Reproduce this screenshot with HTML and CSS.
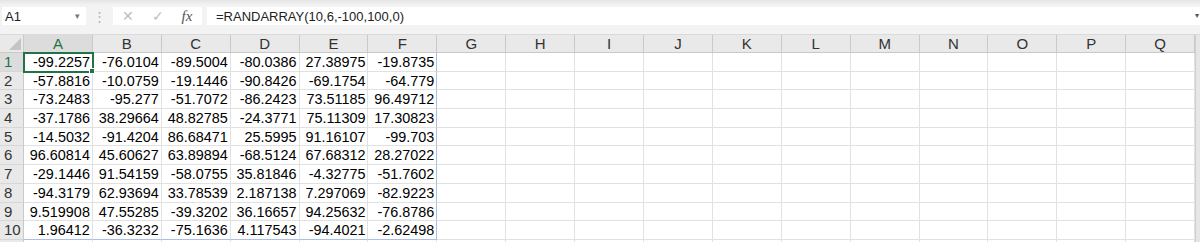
FILE: index.html
```html
<!DOCTYPE html>
<html lang="en">
<head>
    <meta charset="UTF-8">
    <title>Book1 - Excel</title>
    <link rel="stylesheet" href="styles.css">
</head>
<body>
    <div class="app">
        <div class="formula-bar">
            <div class="name-box">
                <span>A1</span>
                <span class="caret">&#9662;</span>
            </div>
            <div class="grip">&#8942;</div>
            <div class="fx-buttons">
                <span class="btn">&#10005;</span>
                <span class="btn">&#10003;</span>
                <span class="btn fx">fx</span>
            </div>
            <div class="formula">
                <span>=RANDARRAY(10,6,-100,100,0)</span>
                <span class="expand">&#9662;</span>
            </div>
        </div>

        <div class="sheet">
            <div class="grid">
                <!-- column headers -->
                <div class="corner">
                    <svg width="12" height="12" viewBox="0 0 12 12"><polygon points="12,0 12,12 0,12" fill="#c4c4c4"/></svg>
                </div>
                <div class="col-head sel">A</div><div class="col-head">B</div><div class="col-head">C</div><div class="col-head">D</div><div class="col-head">E</div><div class="col-head">F</div><div class="col-head">G</div><div class="col-head">H</div><div class="col-head">I</div><div class="col-head">J</div><div class="col-head">K</div><div class="col-head">L</div><div class="col-head">M</div><div class="col-head">N</div><div class="col-head">O</div><div class="col-head">P</div><div class="col-head">Q</div>

                <div class="row-head sel">1</div><div class="active">-99.2257</div><div>-76.0104</div><div>-89.5004</div><div>-80.0386</div><div>27.38975</div><div class="sr">-19.8735</div><div></div><div></div><div></div><div></div><div></div><div></div><div></div><div></div><div></div><div></div><div></div>
                <div class="row-head">2</div><div>-57.8816</div><div>-10.0759</div><div>-19.1446</div><div>-90.8426</div><div>-69.1754</div><div class="sr">-64.779</div><div></div><div></div><div></div><div></div><div></div><div></div><div></div><div></div><div></div><div></div><div></div>
                <div class="row-head">3</div><div>-73.2483</div><div>-95.277</div><div>-51.7072</div><div>-86.2423</div><div>73.51185</div><div class="sr">96.49712</div><div></div><div></div><div></div><div></div><div></div><div></div><div></div><div></div><div></div><div></div><div></div>
                <div class="row-head">4</div><div>-37.1786</div><div>38.29664</div><div>48.82785</div><div>-24.3771</div><div>75.11309</div><div class="sr">17.30823</div><div></div><div></div><div></div><div></div><div></div><div></div><div></div><div></div><div></div><div></div><div></div>
                <div class="row-head">5</div><div>-14.5032</div><div>-91.4204</div><div>86.68471</div><div>25.5995</div><div>91.16107</div><div class="sr">-99.703</div><div></div><div></div><div></div><div></div><div></div><div></div><div></div><div></div><div></div><div></div><div></div>
                <div class="row-head">6</div><div>96.60814</div><div>45.60627</div><div>63.89894</div><div>-68.5124</div><div>67.68312</div><div class="sr">28.27022</div><div></div><div></div><div></div><div></div><div></div><div></div><div></div><div></div><div></div><div></div><div></div>
                <div class="row-head">7</div><div>-29.1446</div><div>91.54159</div><div>-58.0755</div><div>35.81846</div><div>-4.32775</div><div class="sr">-51.7602</div><div></div><div></div><div></div><div></div><div></div><div></div><div></div><div></div><div></div><div></div><div></div>
                <div class="row-head">8</div><div>-94.3179</div><div>62.93694</div><div>33.78539</div><div>2.187138</div><div>7.297069</div><div class="sr">-82.9223</div><div></div><div></div><div></div><div></div><div></div><div></div><div></div><div></div><div></div><div></div><div></div>
                <div class="row-head">9</div><div>9.519908</div><div>47.55285</div><div>-39.3202</div><div>36.16657</div><div>94.25632</div><div class="sr">-76.8786</div><div></div><div></div><div></div><div></div><div></div><div></div><div></div><div></div><div></div><div></div><div></div>
                <div class="row-head">10</div><div class="sb">1.96412</div><div class="sb">-36.3232</div><div class="sb">-75.1636</div><div class="sb">4.117543</div><div class="sb">-94.4021</div><div class="sb sr">-2.62498</div><div></div><div></div><div></div><div></div><div></div><div></div><div></div><div></div><div></div><div></div><div></div>
                <div class="row-head"></div><div></div><div></div><div></div><div></div><div></div><div></div><div></div><div></div><div></div><div></div><div></div><div></div><div></div><div></div><div></div><div></div><div></div>
            </div>
            <div class="vscroll"></div>
        </div>
    </div>
</body>
</html>
```

FILE: styles.css
```css
html, body {
    margin: 0;
    padding: 0;
    overflow: hidden;
}

body {
    font-family: 'Liberation Sans', Arial, sans-serif;
    color: #000;
    background: #fff;
}

.app {
    width: 1200px;
    height: 242px;
    overflow: hidden;
}

/* formula bar */
.formula-bar {
    display: flex;
    align-items: stretch;
    height: 35px;
    padding: 7px 0 9px 2px;
    box-sizing: border-box;
    background: linear-gradient(#e4e4e4, #f3f3f3 5px, #f3f3f3);
    border-bottom: 1px solid #dadada;
}

.name-box {
    width: 84px;
    background: #fff;
    display: flex;
    align-items: center;
    justify-content: space-between;
    padding: 0 4px 0 3px;
    box-sizing: border-box;
    font-size: 13px;
    color: #222;
}

.caret {
    font-size: 9px;
    color: #777;
    margin-right: 2px;
}

.grip {
    width: 27px;
    text-align: center;
    line-height: 19px;
    font-size: 13px;
    color: #b5b5b5;
}

.fx-buttons {
    width: 89px;
    background: #fff;
    display: flex;
    align-items: center;
    box-sizing: border-box;
}

.btn {
    width: 30px;
    text-align: center;
    color: #bdbdbd;
    font-size: 14px;
}

.btn.fx {
    font-family: 'Liberation Serif', serif;
    font-style: italic;
    color: #555;
    font-size: 15px;
    width: 22px;
    margin-left: 3px;
}

.formula {
    flex: 1;
    margin-left: 5px;
    background: #fff;
    display: flex;
    align-items: center;
    justify-content: space-between;
    padding-left: 9px;
    font-size: 13px;
    color: #222;
}

.expand {
    font-size: 8px;
    color: #555;
    margin-right: 1px;
    align-self: flex-start;
    margin-top: 4px;
}

/* sheet */
.sheet {
    display: flex;
}

.grid {
    display: grid;
    grid-template-columns: 24px repeat(17, 68.9px);
    grid-template-rows: 18px repeat(11, 18.7px);
    font-size: 14.4px;
}

.grid > div {
    border-right: 1px solid #e1e1e1;
    border-bottom: 1px solid #e1e1e1;
    text-align: right;
    padding-right: 2px;
    line-height: 18px;
    white-space: nowrap;
    overflow: hidden;
}

.grid > .corner {
    background: #e9e9e9;
    border-right: 1px solid #c9c9c9;
    border-bottom: 1px solid #c9c9c9;
    display: flex;
    align-items: flex-end;
    justify-content: flex-end;
    padding: 0 2px 2px 0;
    box-sizing: border-box;
}

.grid > .col-head {
    background: #e9e9e9;
    text-align: center;
    padding: 0;
    color: #333;
    font-size: 15px;
    border-right: 1px solid #c9c9c9;
    border-bottom: 1px solid #c9c9c9;
    line-height: 18px;
}

.grid > .row-head {
    background: #e9e9e9;
    text-align: left;
    padding-left: 4px;
    color: #333;
    font-size: 15px;
    border-right: 1px solid #c9c9c9;
    border-bottom: 1px solid #d6d6d6;
}

.grid > .sel {
    background: #dcdcdc;
    color: #217346;
}

.grid > .col-head.sel {
    border-bottom: 1px solid #217346;
}

.grid > .row-head.sel {
    border-right: 1px solid #217346;
}

.grid > .sr {
    border-right: 1px solid #a9bfe9;
}

.grid > .sb {
    border-bottom: 1px solid #a9bfe9;
}

.grid > .active {
    position: relative;
    overflow: visible;
    outline: 2px solid #217346;
    outline-offset: -1px;
    z-index: 1;
}

.active::after {
    content: "";
    position: absolute;
    right: -3px;
    bottom: -3px;
    width: 4px;
    height: 4px;
    background: #217346;
    border: 1px solid #fff;
}

.vscroll {
    flex: 1;
    background: #e6e6e6;
    border-left: 1px solid #cfcfcf;
    height: 210px;
}
```
